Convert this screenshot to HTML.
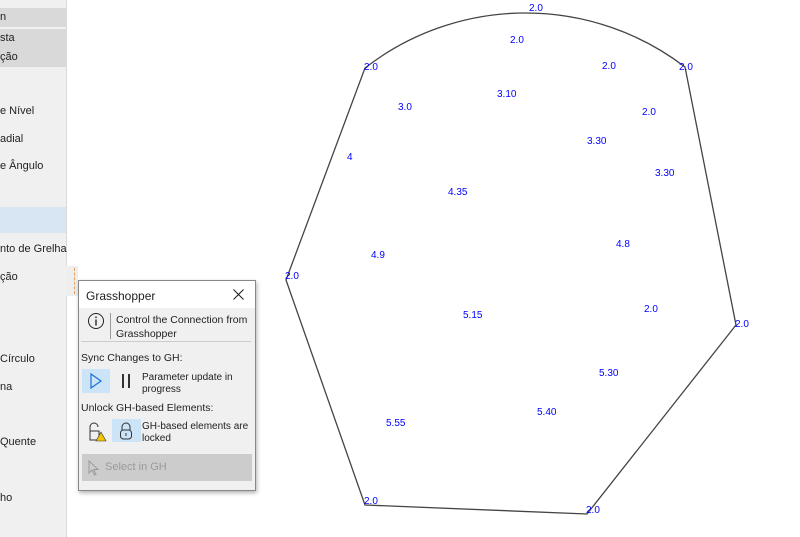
<!DOCTYPE html>
<html><head><style>
body{margin:0;width:800px;height:537px;background:#fff;position:relative;overflow:hidden;font-family:"Liberation Sans",sans-serif;}
#side{position:absolute;left:0;top:0;width:66px;height:537px;background:#f0f0f0;border-right:1px solid #d9d9d9;font-size:11px;color:#222;}
#side div{position:absolute;left:0;white-space:nowrap;}
.band{background:#d9d9d9;width:66px;height:19px;line-height:19px;}
.lbl{position:absolute;font-size:10px;color:#0000ff;font-family:"Liberation Sans",sans-serif;}
#panel{position:absolute;left:78px;top:280px;width:176px;height:209px;background:#f0f0f0;border:1px solid #888;box-shadow:1px 2px 4px rgba(0,0,0,.3);font-size:10.5px;color:#222;}
#panel .t{position:absolute;left:0;top:0;width:176px;height:27px;background:#fff;}
</style></head><body>
<div id="side">
<div class="band" style="top:8px">n</div>
<div class="band" style="top:29px">sta</div>
<div class="band" style="top:48px">ção</div>
<div style="top:105px">e Nível</div>
<div style="top:133px">adial</div>
<div style="top:160px">e Ângulo</div>
<div style="top:207px;width:66px;height:26px;background:#d8e6f3"></div>
<div style="top:243px">nto de Grelha</div>
<div style="top:271px">ção</div>
<div style="top:353px">Círculo</div>
<div style="top:381px">na</div>
<div style="top:436px">Quente</div>
<div style="top:492px">ho</div>
</div>
<div style="position:absolute;left:66px;top:266px;width:12px;height:30px;background:#eee"></div>
<div style="position:absolute;left:74px;top:268px;height:26px;border-left:1px dashed #e8a060"></div>
<svg style="position:absolute;left:0;top:0" width="800" height="537">
<path d="M365,68 A262,262 0 0 1 685,67 L736,325 L587,514 L365,505 L286,280 Z" fill="none" stroke="#444" stroke-width="1.3"/>
</svg>
<div class="lbl" style="left:529px;top:3px">2.0</div>
<div class="lbl" style="left:510px;top:35px">2.0</div>
<div class="lbl" style="left:364px;top:62px">2.0</div>
<div class="lbl" style="left:602px;top:61px">2.0</div>
<div class="lbl" style="left:679px;top:62px">2.0</div>
<div class="lbl" style="left:497px;top:89px">3.10</div>
<div class="lbl" style="left:398px;top:102px">3.0</div>
<div class="lbl" style="left:642px;top:107px">2.0</div>
<div class="lbl" style="left:587px;top:136px">3.30</div>
<div class="lbl" style="left:347px;top:152px">4</div>
<div class="lbl" style="left:655px;top:168px">3.30</div>
<div class="lbl" style="left:448px;top:187px">4.35</div>
<div class="lbl" style="left:616px;top:239px">4.8</div>
<div class="lbl" style="left:371px;top:250px">4.9</div>
<div class="lbl" style="left:285px;top:271px">2.0</div>
<div class="lbl" style="left:644px;top:304px">2.0</div>
<div class="lbl" style="left:463px;top:310px">5.15</div>
<div class="lbl" style="left:735px;top:319px">2.0</div>
<div class="lbl" style="left:599px;top:368px">5.30</div>
<div class="lbl" style="left:537px;top:407px">5.40</div>
<div class="lbl" style="left:386px;top:418px">5.55</div>
<div class="lbl" style="left:364px;top:496px">2.0</div>
<div class="lbl" style="left:586px;top:505px">2.0</div>
<div id="panel">
<div class="t"><span style="position:absolute;left:7px;top:8px;font-size:12px">Grasshopper</span><svg style="position:absolute;left:154px;top:8px" width="11" height="11"><path d="M0.5,0.5 L10.5,10.5 M10.5,0.5 L0.5,10.5" stroke="#222" stroke-width="1.1"/></svg></div>
<svg style="position:absolute;left:8px;top:31px" width="18" height="18"><circle cx="9" cy="9" r="7.5" fill="none" stroke="#222"/><rect x="8.3" y="7.5" width="1.4" height="6" fill="#222"/><rect x="8.3" y="4.5" width="1.4" height="1.6" fill="#222"/></svg>
<div style="position:absolute;left:31px;top:32px;height:26px;border-left:1px solid #999"></div>
<div style="position:absolute;left:37px;top:32px;line-height:14px;font-size:10.5px">Control the Connection from<br>Grasshopper</div>
<div style="position:absolute;left:2px;top:60px;width:170px;border-top:1px solid #ccc"></div>
<div style="position:absolute;left:2px;top:71px">Sync Changes to GH:</div>
<div style="position:absolute;left:3px;top:88px;width:28px;height:24px;background:#cce4f7"></div>
<svg style="position:absolute;left:9px;top:92px" width="16" height="16"><path d="M3,1 L13,8 L3,15 Z" fill="none" stroke="#1a6fd8" stroke-width="1.2"/></svg>
<div style="position:absolute;left:43px;top:93px;width:2px;height:14px;background:#333"></div>
<div style="position:absolute;left:49px;top:93px;width:2px;height:14px;background:#333"></div>
<div style="position:absolute;left:63px;top:91px;font-size:10px;line-height:12px">Parameter update in<br>progress</div>
<div style="position:absolute;left:2px;top:121px">Unlock GH-based Elements:</div>
<svg style="position:absolute;left:8px;top:140px" width="20" height="22"><path d="M3,10 V6 a4,4 0 0 1 8,0" fill="none" stroke="#333"/><rect x="3" y="10" width="9" height="9" fill="none" stroke="#333"/><path d="M14,11 L19,20 L9,20 Z" fill="#f5c400" stroke="#333" stroke-width=".6"/></svg>
<div style="position:absolute;left:33px;top:138px;width:29px;height:23px;background:#cce4f7"></div>
<svg style="position:absolute;left:39px;top:140px" width="16" height="20"><path d="M4,9 V6 a4,4 0 0 1 8,0 V9" fill="none" stroke="#333"/><rect x="2.5" y="9" width="11" height="9" rx="3" fill="none" stroke="#333"/><rect x="7.5" y="12" width="1" height="3" fill="#333"/></svg>
<div style="position:absolute;left:63px;top:140px;font-size:10px;line-height:12px">GH-based elements are<br>locked</div>
<div style="position:absolute;left:3px;top:173px;width:170px;height:27px;background:#cccccc;color:#9a9a9a;font-size:11px"><svg style="position:absolute;left:6px;top:6px" width="12" height="16"><path d="M1,1 L1,13 L4,10 L6.5,15 L8,14.3 L5.7,9.5 L10,9.5 Z" fill="none" stroke="#9a9a9a"/></svg><span style="position:absolute;left:23px;top:7px">Select in GH</span></div>
</div>
</body></html>
